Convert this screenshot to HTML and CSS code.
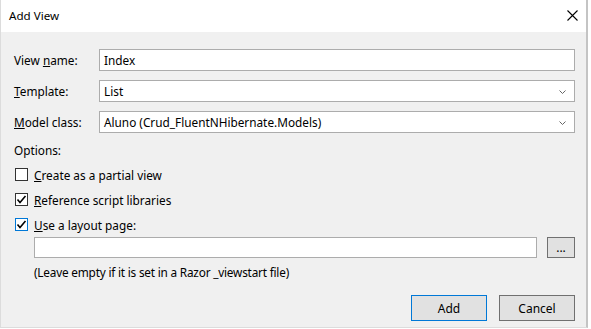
FILE: index.html
```html
<!DOCTYPE html>
<html lang="en">

<head>
    <meta charset="UTF-8">
    <meta name="viewport" content="width=device-width, initial-scale=1.0">
    <title>Add View</title>
    <link rel="stylesheet" href="styles.css">
</head>

<body>
    <div class="window">
        <div class="title-bar">
            <span class="title">Add View</span>
            <svg class="close" width="11" height="11" viewBox="0 0 11 11">
                <path d="M0.5 0.5 L10.5 10.5 M10.5 0.5 L0.5 10.5" stroke="#000" stroke-width="1.1" fill="none" />
            </svg>
        </div>

        <div class="content">
            <div class="field-row">
                <label>View <u>n</u>ame:</label>
                <div class="text-box">Index</div>
            </div>
            <div class="field-row">
                <label><u>T</u>emplate:</label>
                <div class="text-box combo">
                    <span>List</span>
                    <svg width="7" height="4" viewBox="0 0 7 4"><path d="M0.5 0.5 L3.5 3.5 L6.5 0.5" stroke="#666" fill="none" /></svg>
                </div>
            </div>
            <div class="field-row">
                <label><u>M</u>odel class:</label>
                <div class="text-box combo">
                    <span>Aluno (Crud_FluentNHibernate.Models)</span>
                    <svg width="7" height="4" viewBox="0 0 7 4"><path d="M0.5 0.5 L3.5 3.5 L6.5 0.5" stroke="#666" fill="none" /></svg>
                </div>
            </div>

            <div class="options-title">Options:</div>

            <div class="check-list">
                <div class="check-row">
                    <span class="check-box"></span>
                    <span><u>C</u>reate as a partial view</span>
                </div>
                <div class="check-row">
                    <span class="check-box">
                        <svg width="11" height="11" viewBox="0 0 11 11"><path d="M1.5 5.5 L4 8.5 L9.5 2" stroke="#000" stroke-width="1.6" fill="none" /></svg>
                    </span>
                    <span><u>R</u>eference script libraries</span>
                </div>
                <div class="check-row">
                    <span class="check-box focused">
                        <svg width="11" height="11" viewBox="0 0 11 11"><path d="M1.5 5.5 L4 8.5 L9.5 2" stroke="#000" stroke-width="1.6" fill="none" /></svg>
                    </span>
                    <span><u>U</u>se a layout page:</span>
                </div>
            </div>

            <div class="layout-row">
                <div class="text-box layout-input"></div>
                <button class="browse-btn">...</button>
            </div>
            <div class="hint">(Leave empty if it is set in a Razor _viewstart file)</div>

            <div class="actions">
                <button class="btn default">Add</button>
                <button class="btn">Cancel</button>
            </div>
        </div>
    </div>
</body>

</html>
```

FILE: styles.css
```css
* {
    margin: 0;
    padding: 0;
    box-sizing: border-box;
}

body {
    background-color: white;
    font-family: "Noto Sans", "Open Sans", sans-serif;
    font-size: 11.8px;
    color: black;
}

.window {
    width: 588px;
    height: 328px;
    border-left: 1px solid #dcdcdc;
    border-right: 2px solid #c4c4c4;
    border-bottom: 1px solid #dcdcdc;
    display: flex;
    flex-direction: column;
}

.title-bar {
    height: 32px;
    background-color: white;
    display: flex;
    align-items: center;
    justify-content: space-between;
    padding: 0 8px 0 8px;
}

.title {
    font-size: 11.6px;
    margin-top: -2px;
}

.close {
    margin-top: -1px;
}

.content {
    flex: 1;
    background-color: #f0f0f0;
    padding: 17px 11px 0 13px;
}

.field-row {
    display: flex;
    align-items: center;
    height: 22px;
    margin-bottom: 9px;
}

.field-row label {
    width: 85px;
}

.text-box {
    flex: 1;
    height: 22px;
    background-color: white;
    border: 1px solid #acacac;
    padding: 0 4px;
    display: flex;
    align-items: center;
    line-height: 16px;
}

.combo {
    justify-content: space-between;
    padding-right: 8px;
}

.combo svg {
    margin-top: 1px;
}

.options-title {
    margin-top: 9px;
    line-height: 16px;
}

.check-list {
    margin-top: 4px;
}

.check-row {
    display: flex;
    align-items: center;
    height: 25px;
    gap: 6px;
    padding-left: 1px;
}

.check-box {
    width: 13px;
    height: 13px;
    border: 1px solid #333;
    background-color: white;
    display: flex;
    align-items: center;
    justify-content: center;
}

.check-box.focused {
    border-color: #0078d7;
}

.layout-row {
    display: flex;
    gap: 10px;
    padding-left: 20px;
}

.layout-input {
    height: 21px;
}

.browse-btn {
    width: 28px;
    height: 21px;
    border: 1px solid #707070;
    background-color: #e1e1e1;
    font-family: inherit;
    font-size: 12px;
    line-height: 12px;
}

.hint {
    padding-left: 20px;
    margin-top: 6px;
    line-height: 16px;
    letter-spacing: -0.2px;
}

.actions {
    display: flex;
    justify-content: flex-end;
    gap: 12px;
    margin-top: 15px;
}

.btn {
    width: 76px;
    height: 26px;
    border: 1px solid #707070;
    background-color: #e1e1e1;
    font-family: inherit;
    font-size: 12px;
    color: black;
}

.btn.default {
    border-color: #0078d7;
}
```
